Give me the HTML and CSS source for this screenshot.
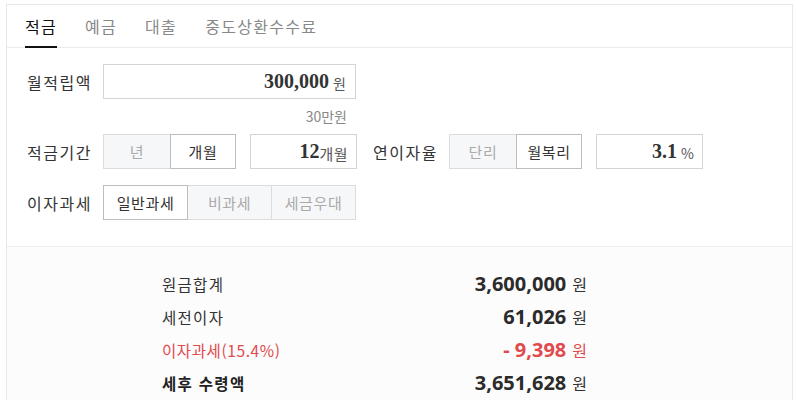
FILE: index.html
```html
<!DOCTYPE html>
<html lang="ko">
<head>
<meta charset="utf-8">
<link rel="stylesheet" href="styles.css">
</head>
<body>
<div class="calc">
  <nav class="tabs">
    <span class="tab active">적금</span>
    <span class="tab">예금</span>
    <span class="tab">대출</span>
    <span class="tab">중도상환수수료</span>
  </nav>
  <section class="form">
    <div class="row">
      <span class="label">월적립액</span>
      <div class="field wide"><b class="num">300,000</b><span class="unit">원</span></div>
    </div>
    <div class="hint">30만원</div>
    <div class="row">
      <span class="label">적금기간</span>
      <div class="seg">
        <span class="opt w68">년</span>
        <span class="opt on w65">개월</span>
      </div>
      <div class="field short"><b class="num">12</b><span class="unit tight">개월</span></div>
      <span class="label second">연이자율</span>
      <div class="seg">
        <span class="opt w68">단리</span>
        <span class="opt on w65">월복리</span>
      </div>
      <div class="field short"><b class="num">3.1</b><span class="unit">%</span></div>
    </div>
    <div class="row gap">
      <span class="label">이자과세</span>
      <div class="seg">
        <span class="opt on w85">일반과세</span>
        <span class="opt w83">비과세</span>
        <span class="opt w85">세금우대</span>
      </div>
    </div>
  </section>
  <section class="result">
    <div class="line"><span class="name">원금합계</span><span class="val"><b>3,600,000</b><span class="won">원</span></span></div>
    <div class="line"><span class="name">세전이자</span><span class="val"><b>61,026</b><span class="won">원</span></span></div>
    <div class="line red"><span class="name">이자과세(15.4%)</span><span class="val"><b>- 9,398</b><span class="won">원</span></span></div>
    <div class="line total"><span class="name">세후 수령액</span><span class="val"><b>3,651,628</b><span class="won">원</span></span></div>
  </section>
</div>
</body>
</html>
```
FILE: styles.css
```css
* { box-sizing: border-box; }
html, body { margin: 0; background: #fff; }
body {
  padding: 4px 0 0 6px;
  font-family: "Noto Sans CJK KR", "Noto Sans", sans-serif;
  color: #333;
}
.calc {
  width: 787px;
  height: 420px;
  border: 1px solid #e8e8e8;
}
.tabs {
  display: flex;
  gap: 28px;
  padding: 0 18px;
  height: 43px;
  border-bottom: 1px solid #ebebeb;
}
.tab {
  font-size: 16px;
  color: #888;
  line-height: 40px;
  height: 43px;
  padding-top: 1px;
  letter-spacing: 1.3px;
}
.tab.active {
  color: #111;
  border-bottom: 2px solid #111;
}
.form {
  padding: 16px 0 26px 20px;
  border-bottom: 1px solid #eee;
}
.row {
  display: flex;
  align-items: center;
  height: 35px;
}
.row.gap { margin-top: 16px; }
.label {
  width: 76px;
  font-size: 16px;
  color: #333;
  letter-spacing: 1.5px;
  white-space: nowrap;
}
.label.second { margin-left: 16px; }
.field {
  height: 35px;
  border: 1px solid #d4d4d4;
  display: flex;
  align-items: center;
  justify-content: flex-end;
  padding-right: 8px;
  background: #fff;
}
.field.wide { width: 253px; padding-right: 9px; }
.field.short { width: 107px; margin-left: 14px; }
.num {
  font-family: "Liberation Serif", "DejaVu Serif", serif;
  font-weight: bold;
  font-size: 20px;
  color: #333;
}
.unit {
  font-size: 14px;
  color: #555;
  margin-left: 4px;
  padding-top: 3px;
}
.unit.tight { margin-left: 0; font-size: 15px; letter-spacing: 0.5px; }
.hint {
  width: 244px;
  margin-left: 76px;
  text-align: right;
  font-size: 14px;
  color: #888;
  height: 35px;
  line-height: 35px;
}
.seg { display: flex; }
.opt {
  height: 35px;
  line-height: 33px;
  text-align: center;
  font-size: 15px;
  color: #aaa;
  background: #f6f7f9;
  border: 1px solid #dcdcdc;
  margin-left: -1px;
  letter-spacing: 0.6px;
}
.opt:first-child { margin-left: 0; }
.opt.on {
  background: #fff;
  color: #333;
  border-color: #bdbdbd;
  position: relative;
}
.w68 { width: 68px; }
.w65 { width: 66px; }
.w85 { width: 85px; }
.w83 { width: 85px; }
.result {
  background: #fcfcfc;
  height: 172px;
  padding: 20px 0 0 155px;
}
.line {
  width: 425px;
  height: 33px;
  display: flex;
  align-items: center;
  justify-content: space-between;
}
.name {
  font-size: 15.5px;
  color: #333;
  letter-spacing: 1.3px;
}
.val b {
  font-family: "Noto Sans", "Noto Sans CJK KR", sans-serif;
  font-size: 20px;
  font-weight: bold;
  color: #2b2b2b;
}
.won {
  font-size: 16px;
  margin-left: 6px;
  color: #333;
}
.red .name, .red .val b, .red .won { color: #e14a4d; }
.red .name { letter-spacing: 0.6px; }
.total .name { font-weight: bold; color: #222; }
```
